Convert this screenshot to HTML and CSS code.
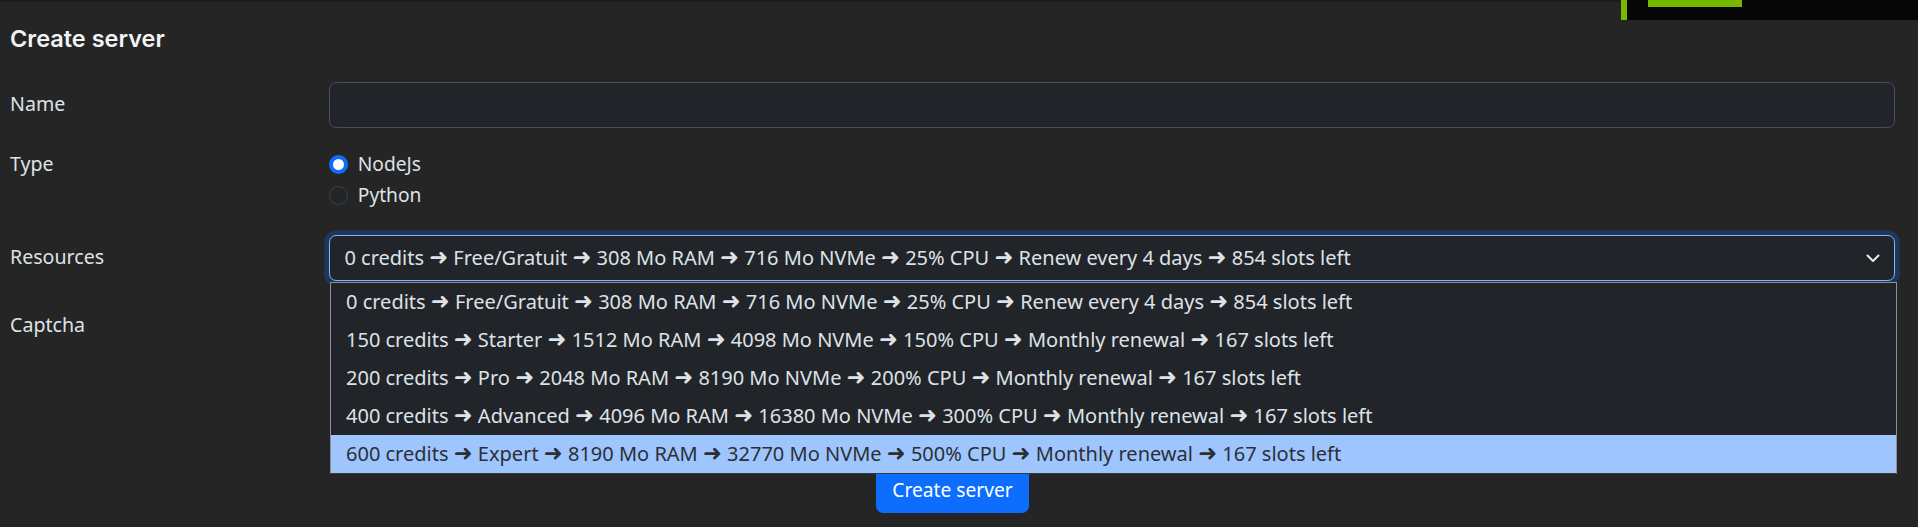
FILE: index.html
```html
<!DOCTYPE html>
<html>
<head>
	<meta charset="utf-8">
	<title>Create server</title>
	<link rel="stylesheet" href="styles.css">
</head>
<body>
	<div class="status-widget">
		<span class="status-widget_bar"></span>
	</div>
	<div class="page">
		<h5 class="page-title">Create server</h5>
		<form class="server-form">
			<div class="form-row">
				<label class="form-label" for="name">Name</label>
				<input class="form-input" id="name" type="text">
			</div>
			<div class="form-row">
				<span class="form-label form-label_top">Type</span>
				<div class="radio-group">
					<label class="radio-item">
						<span class="radio radio_checked"></span>NodeJs
					</label>
					<label class="radio-item">
						<span class="radio"></span>Python
					</label>
				</div>
			</div>
			<div class="form-row">
				<span class="form-label">Resources</span>
				<div class="select-wrap">
					<div class="select">
						<span>0 credits <i class="arr">➜</i> Free/Gratuit <i class="arr">➜</i> 308 Mo RAM <i class="arr">➜</i> 716 Mo NVMe <i class="arr">➜</i> 25% CPU <i class="arr">➜</i> Renew every 4 days <i class="arr">➜</i> 854 slots left</span>
						<svg class="select-arrow" width="16" height="16" viewBox="0 0 16 16">
							<path d="M2.5 5.5l5.5 5.5 5.5-5.5" fill="none" stroke="#e9ecef" stroke-width="2" stroke-linecap="round" stroke-linejoin="round"/>
						</svg>
					</div>
					<ul class="select-list">
						<li class="select-option">0 credits <i class="arr">➜</i> Free/Gratuit <i class="arr">➜</i> 308 Mo RAM <i class="arr">➜</i> 716 Mo NVMe <i class="arr">➜</i> 25% CPU <i class="arr">➜</i> Renew every 4 days <i class="arr">➜</i> 854 slots left</li>
						<li class="select-option">150 credits <i class="arr">➜</i> Starter <i class="arr">➜</i> 1512 Mo RAM <i class="arr">➜</i> 4098 Mo NVMe <i class="arr">➜</i> 150% CPU <i class="arr">➜</i> Monthly renewal <i class="arr">➜</i> 167 slots left</li>
						<li class="select-option">200 credits <i class="arr">➜</i> Pro <i class="arr">➜</i> 2048 Mo RAM <i class="arr">➜</i> 8190 Mo NVMe <i class="arr">➜</i> 200% CPU <i class="arr">➜</i> Monthly renewal <i class="arr">➜</i> 167 slots left</li>
						<li class="select-option">400 credits <i class="arr">➜</i> Advanced <i class="arr">➜</i> 4096 Mo RAM <i class="arr">➜</i> 16380 Mo NVMe <i class="arr">➜</i> 300% CPU <i class="arr">➜</i> Monthly renewal <i class="arr">➜</i> 167 slots left</li>
						<li class="select-option select-option_active">600 credits <i class="arr">➜</i> Expert <i class="arr">➜</i> 8190 Mo RAM <i class="arr">➜</i> 32770 Mo NVMe <i class="arr">➜</i> 500% CPU <i class="arr">➜</i> Monthly renewal <i class="arr">➜</i> 167 slots left</li>
					</ul>
				</div>
			</div>
			<div class="form-row">
				<span class="form-label">Captcha</span>
				<div class="captcha">
					<div class="captcha-img"></div>
					<input class="form-input" type="text">
				</div>
			</div>
			<div class="form-submit">
				<button class="btn" type="button">Create server</button>
			</div>
		</form>
	</div>
</body>
</html>
```

FILE: styles.css
```css
* {
	margin: 0;
	padding: 0;
	box-sizing: border-box;
}
body {
	font-family: 'Noto Sans', 'Open Sans', 'DejaVu Sans', sans-serif;
	font-size: 19.2px;
	line-height: 1.5;
	color: #dee2e6;
	background-color: #252525;
	border-top: 2px solid #1b1b1b;
	height: 527px;
	overflow: hidden;
}
ul li {
	list-style: none;
}
.arr {
	font-family: 'DejaVu Sans', sans-serif;
	font-style: normal;
	font-size: 1.13em;
	line-height: 1;
}
.status-widget {
	position: absolute;
	top: 0;
	right: 0;
	width: 297px;
	height: 20px;
	background: #060606;
	border-left: 6px solid #76b900;
}
.status-widget_bar {
	display: block;
	width: 94px;
	height: 7px;
	margin-left: 21px;
	background: #76b900;
}
.page {
	padding: 22px 23px 0 10px;
}
.page-title {
	font-family: 'Inter', 'Noto Sans', sans-serif;
	font-size: 23.5px;
	font-weight: 600;
	line-height: 30px;
	color: #f1f3f5;
	margin-bottom: 28px;
}
.form-row {
	display: grid;
	grid-template-columns: 319px 1fr;
	margin-bottom: 22.5px;
}
.form-label {
	padding: 8.4px 0;
	line-height: 28.8px;
	font-size: 19.6px;
}
.form-label_top {
	padding-top: 0;
}
.form-input {
	display: block;
	width: 100%;
	height: 45.6px;
	padding: 7.2px 14.4px;
	font: inherit;
	color: #dee2e6;
	background: #212529;
	border: 1.2px solid #495057;
	border-radius: 7.2px;
}
.radio-group {
	display: flex;
	flex-direction: column;
}
.radio-item {
	display: flex;
	align-items: center;
	min-height: 28.8px;
	margin-bottom: 2.4px;
}
.radio {
	width: 19.2px;
	height: 19.2px;
	margin-right: 9.6px;
	border-radius: 50%;
	background: #212529;
	border: 1.2px solid #3d4247;
}
.radio_checked {
	background: #fff;
	border: 4.8px solid #0d6efd;
}
.select-wrap {
	position: relative;
	font-size: 20px;
}
.select {
	display: flex;
	align-items: center;
	justify-content: space-between;
	height: 45.6px;
	padding: 0 13px 0 14.4px;
	background: #212529;
	border: 1.2px solid #86b7fe;
	border-radius: 7.2px;
	box-shadow: 0 0 0 4.8px rgba(13, 110, 253, 0.25);
}
.select-list {
	position: absolute;
	top: calc(100% + 1px);
	left: 1px;
	right: -2px;
	z-index: 2;
	background: #212529;
	border: 1px solid #8d8f91;
	border-bottom-color: #3a3a3a;
}
.select-option {
	height: 38px;
	padding: 0 15px;
	line-height: 38px;
	white-space: nowrap;
}
.select-option_active {
	background: #9ec5fe;
	color: #2b3035;
}
.captcha {
	display: flex;
	flex-direction: column;
	gap: 12px;
	padding-left: 6px;
}
.captcha-img {
	width: 180px;
	height: 84px;
	background: #3a3f44;
	border-radius: 6px;
}
.form-submit {
	text-align: center;
}
.btn {
	height: 45.6px;
	padding: 0 16px;
	font: inherit;
	color: #fff;
	background: #0d6efd;
	border: none;
	border-radius: 7.2px;
}
```
